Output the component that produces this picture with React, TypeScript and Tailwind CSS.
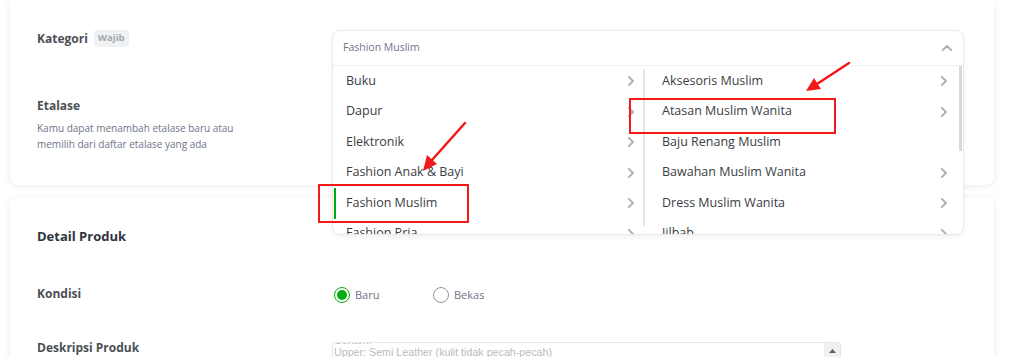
import React from 'react';

const leftItems = ['Buku', 'Dapur', 'Elektronik', 'Fashion Anak & Bayi', 'Fashion Muslim', 'Fashion Pria'];
const rightItems: { label: string; arrow: boolean }[] = [
  { label: 'Aksesoris Muslim', arrow: true },
  { label: 'Atasan Muslim Wanita', arrow: true },
  { label: 'Baju Renang Muslim', arrow: false },
  { label: 'Bawahan Muslim Wanita', arrow: true },
  { label: 'Dress Muslim Wanita', arrow: true },
  { label: 'Jilbab', arrow: true },
];

const Chevron = () => (
  <svg width="8" height="12" viewBox="0 0 8 12" className="shrink-0">
    <path d="M1.8 1.8 L6 6 L1.8 10.2" fill="none" stroke="#a8aeb6" strokeWidth="1.8" strokeLinecap="round" strokeLinejoin="round" />
  </svg>
);

const Row = ({ label, arrow = true, active = false, pl }: { label: string; arrow?: boolean; active?: boolean; pl: string }) => (
  <div className={`relative h-[30.5px] shrink-0 flex items-center justify-between ${pl} text-[12.5px] text-[#3a3e44]`}>
    {active && <div className="absolute left-[1px] top-0 bottom-0 w-[2px] bg-[#03ac0e]" />}
    <span>{label}</span>
    {arrow && <Chevron />}
  </div>
);

export default function App() {
  return (
    <div className="relative w-[1024px] h-[357px] overflow-hidden bg-white px-[10px] font-['Open_Sans',sans-serif]">
      {/* card 1 */}
      <div className="relative h-[185px] w-[984px] rounded-b-[8px] bg-white shadow-[0_1px_6px_rgba(0,0,0,0.09)] pl-[27px] pt-[30px]">
        <div className="w-[295px]">
          <div className="flex items-center gap-[6px] h-[17px]">
            <span className="text-[12px] font-bold text-[#4b4f55]">Kategori</span>
            <span className="rounded-[3px] bg-[#f0f1f3] px-[4px] h-[17px] flex items-center text-[9.5px] font-bold text-[#a1a7b0]">Wajib</span>
          </div>
          <div className="mt-[50px] text-[12px] font-bold leading-[18px] text-[#4b4f55]">Etalase</div>
          <p className="mt-[5px] text-[10px] leading-[16px] text-[#6d7588]">
            Kamu dapat menambah etalase baru atau
            <br />
            memilih dari daftar etalase yang ada
          </p>
        </div>

        {/* dropdown */}
        <div className="absolute left-[322px] top-[30px] z-10 w-[632px] h-[205px] overflow-hidden rounded-[8px] border border-[#e8eaed] bg-white shadow-[0_2px_6px_rgba(0,0,0,0.06)]">
          <div className="h-[35px] flex items-center justify-between pl-[10px] pr-[10px] border-b border-[#eef0f2]">
            <span className="text-[10.5px] text-[#6d7588]">Fashion Muslim</span>
            <svg width="12" height="8" viewBox="0 0 12 8">
              <path d="M1.8 6.2 L6 2 L10.2 6.2" fill="none" stroke="#a8aeb6" strokeWidth="1.8" strokeLinecap="round" strokeLinejoin="round" />
            </svg>
          </div>
          <div className="flex h-[170px]">
            <div className="w-[310px] flex flex-col pr-[8px]">
              {leftItems.map((it) => (
                <Row key={it} label={it} active={it === 'Fashion Muslim'} pl="pl-[13px]" />
              ))}
            </div>
            <div className="w-[2px] mt-[3px] h-[157px] bg-[#e3e5e8]" />
            <div className="relative flex-1 flex flex-col pr-[15px]">
              {rightItems.map((it) => (
                <Row key={it.label} label={it.label} arrow={it.arrow} pl="pl-[17px]" />
              ))}
              <div className="absolute right-[1px] top-0 w-[3px] h-[85px] bg-[#d6d9dd]" />
            </div>
          </div>
        </div>
      </div>

      {/* card 2 */}
      <div className="mt-[12px] h-[200px] w-[984px] rounded-t-[8px] bg-white shadow-[0_1px_6px_rgba(0,0,0,0.09)] pl-[27px] pt-[29px]">
        <div className="text-[13px] font-bold leading-[20px] text-[#31353b]">Detail Produk</div>
        <div className="mt-[38px] flex items-center h-[20px]">
          <div className="w-[295px] text-[12px] font-bold text-[#4b4f55]">Kondisi</div>
          <div className="flex items-center pt-[2px]">
            <div className="w-[99px] flex items-center gap-[5px] ml-[2px]">
              <span className="w-[16px] h-[16px] rounded-full border-[1.5px] border-[#03ac0e] flex items-center justify-center">
                <span className="w-[10px] h-[10px] rounded-full bg-[#03ac0e]" />
              </span>
              <span className="text-[11px] text-[#6d7588]">Baru</span>
            </div>
            <div className="flex items-center gap-[5px]">
              <span className="w-[16px] h-[16px] rounded-full border-[1.5px] border-[#8d96a1]" />
              <span className="text-[11px] text-[#6d7588]">Bekas</span>
            </div>
          </div>
        </div>
        <div className="mt-[34px] flex">
          <div className="w-[295px] h-[20px] flex items-center text-[12px] font-bold text-[#4b4f55]">Deskripsi Produk</div>
          <div className="relative mt-[4px] w-[509px] h-[40px] overflow-hidden rounded-t-[3px] border border-[#e5e7e9] pl-[1px]">
            <div className="-mt-[9px] font-['Liberation_Sans',Arial,sans-serif] text-[10.7px] leading-[12px] text-[#b9bcc0]">
              <div>Contoh:</div>
              <div>Upper: Semi Leather (kulit tidak pecah-pecah)</div>
            </div>
            <div className="absolute right-0 top-0 w-[16px] h-[16px] bg-[#f1f1f1] flex items-center justify-center">
              <svg width="7" height="4" viewBox="0 0 7 4">
                <path d="M0 4 L3.5 0 L7 4 Z" fill="#5f5f5f" />
              </svg>
            </div>
          </div>
        </div>
      </div>

      {/* annotations */}
      <div className="pointer-events-none absolute inset-0 z-20">
        <div className="absolute left-[318px] top-[184px] w-[151px] h-[39px] border-[2.5px] border-[#f2191b]" />
        <div className="absolute left-[629px] top-[98px] w-[207px] h-[36px] border-[2.5px] border-[#f2191b]" />
        <svg width="1024" height="357" className="absolute inset-0">
          <line x1="465" y1="123" x2="432" y2="160" stroke="#f2191b" strokeWidth="2.5" strokeLinecap="round" />
          <polygon points="423,171 427,155 437,164" fill="#f2191b" />
          <line x1="849" y1="63" x2="817" y2="84" stroke="#f2191b" strokeWidth="2.5" strokeLinecap="round" />
          <polygon points="806,91 814,78 821,89" fill="#f2191b" />
        </svg>
      </div>
    </div>
  );
}
